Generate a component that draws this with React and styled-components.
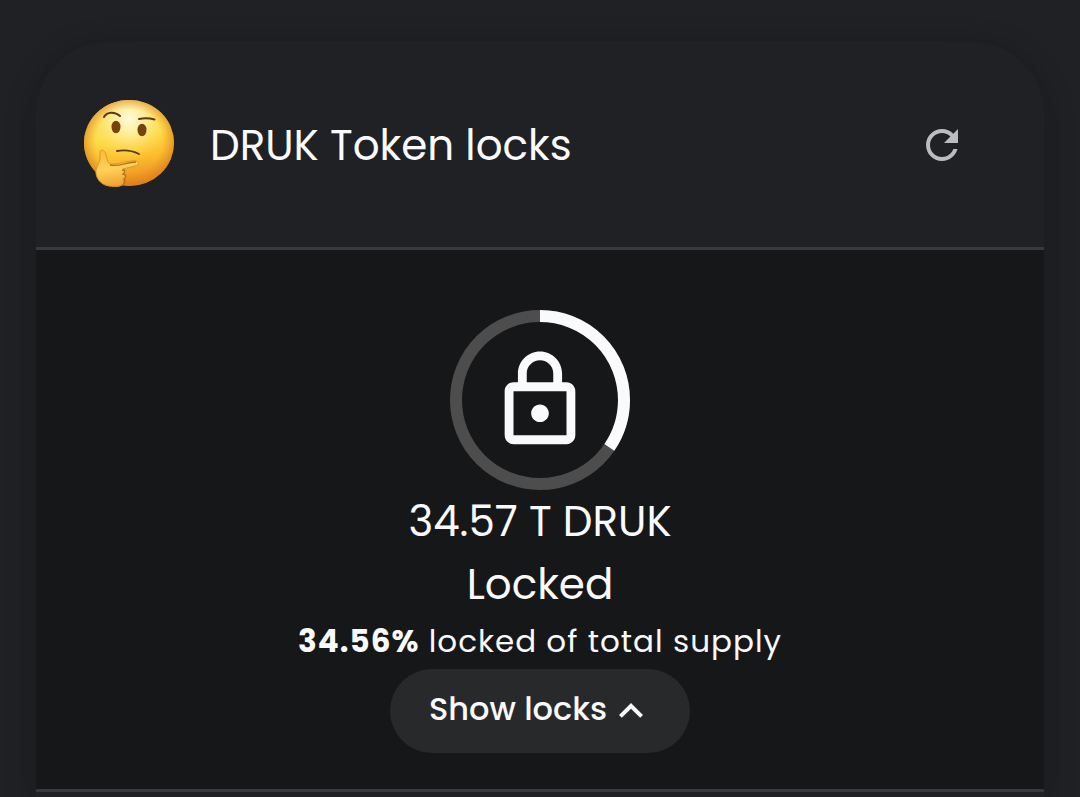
import React from 'react';
import styled, { createGlobalStyle } from 'styled-components';

const GlobalStyle = createGlobalStyle`
  *, *::before, *::after { box-sizing: border-box; }
  html { background: #202125; }
  body {
    margin: 0;
    color: #fafafc;
    font-family: Poppins, Inter, "Liberation Sans", sans-serif;
    -webkit-font-smoothing: antialiased;
  }
`;

const Page = styled.main`
  min-height: 100vh;
  padding: 42px 36px 0;
  display: flex;
  flex-direction: column;
  background: #202125;
  overflow: hidden;
`;

const Card = styled.section`
  flex: 1;
  border-radius: 72px 72px 0 0;
  background: #202124;
  box-shadow: 0 6px 30px rgba(10, 10, 12, 0.28);
  overflow: hidden;
`;

const CardHeader = styled.header`
  display: flex;
  align-items: center;
  gap: 36px;
  padding: 58px 78px 57px 48px;
  border-bottom: 3px solid #38393d;
`;

const Title = styled.h1`
  flex: 1;
  margin: 0;
  font-size: 42px;
  line-height: 63px;
  font-weight: 400;
`;

const IconButton = styled.button`
  display: flex;
  padding: 0;
  border: 0;
  background: none;
  color: #bcbcbe;
  cursor: pointer;
`;

const Icon = styled.svg`
  display: block;
  flex: none;
  width: ${(p) => p.$size}px;
  height: ${(p) => p.$size}px;
  fill: currentColor;
`;

const Emoji = styled.svg`
  display: block;
  flex: none;
  width: 90px;
  height: 90px;
`;

const CardBody = styled.div`
  display: flex;
  flex-direction: column;
  align-items: center;
  padding: 60px 24px 36px;
  background: #161719;
  border-bottom: 3px solid #38393d;
  text-align: center;
`;

const Progress = styled.div`
  display: grid;
  place-items: center;
  width: 180px;
  height: 180px;

  > * { grid-area: 1 / 1; }
`;

const Ring = styled.svg`
  width: 100%;
  height: 100%;
  fill: none;
  stroke-width: 12;
`;

const Amount = styled.p`
  margin: 0;
  font-size: 42px;
  line-height: 63px;
`;

const Share = styled.p`
  margin: 0 0 3px;
  font-size: 31px;
  line-height: 50px;
  letter-spacing: 1px;
`;

const ToggleButton = styled.button`
  display: flex;
  align-items: center;
  min-height: 84px;
  padding: 0 35px 0 39px;
  border: 0;
  border-radius: 42px;
  background: #28292b;
  color: inherit;
  font: inherit;
  font-size: 32px;
  font-weight: 500;
  cursor: pointer;
`;

const ToggleLabel = styled.span`
  padding-bottom: 4px;
`;

function ThinkingFace() {
  return (
    <Emoji viewBox="0 1 90 90" role="img" aria-label="Thinking face">
      <defs>
        <linearGradient id="skin" x1="0.4" y1="0" x2="0.6" y2="1">
          <stop offset="0" stopColor="#fbd86a" />
          <stop offset="0.4" stopColor="#fddb46" />
          <stop offset="0.68" stopColor="#fbbd30" />
          <stop offset="1" stopColor="#e8871d" />
        </linearGradient>
        <radialGradient id="shine" cx="0.5" cy="0.22" r="0.48">
          <stop offset="0" stopColor="#fffbdc" />
          <stop offset="0.4" stopColor="#fff1a5" stopOpacity="0.8" />
          <stop offset="1" stopColor="#ffe04d" stopOpacity="0" />
        </radialGradient>
        <radialGradient id="rim" cx="0.5" cy="0.48" r="0.53">
          <stop offset="0.7" stopColor="#e68a18" stopOpacity="0" />
          <stop offset="1" stopColor="#d67a19" stopOpacity="0.76" />
        </radialGradient>
        <linearGradient id="hand" x1="0.3" y1="0" x2="0.5" y2="1">
          <stop offset="0" stopColor="#fbbd38" />
          <stop offset="0.5" stopColor="#ffd158" />
          <stop offset="1" stopColor="#efa02f" />
        </linearGradient>
      </defs>
      <ellipse cx="45" cy="44" rx="45" ry="43" fill="url(#skin)" />
      <ellipse cx="45" cy="44" rx="45" ry="43" fill="url(#shine)" />
      <ellipse cx="45" cy="44" rx="45" ry="43" fill="url(#rim)" />
      <g fill="none" stroke="#5a3a18" strokeLinecap="round">
        <path d="M20 18C23 12.500 31 12.500 36 17" strokeWidth="2" />
        <path d="M55 20C60 19 65 19 70.500 20.500" strokeWidth="2" />
        <path d="M33 52Q45 50 55 55" strokeWidth="1.800" />
      </g>
      <ellipse cx="32" cy="28" rx="4.500" ry="6.200" fill="#77410f" />
      <ellipse cx="58" cy="31" rx="4.500" ry="6.200" fill="#77410f" />
      <path
        d="M16 53C17 49.500 21 51 22 56C23 60 23 63 26 65C33 66 44 61 52 62C56 63 55 66 51 67L39 70C43 71 43 74 40 75C43 77 41 80 39 81C42 88 32 88 25 87C17 86 11 79 12 71C13 66 16 63 16 59Z"
        fill="url(#hand)"
        stroke="#dd952a"
        strokeWidth="1"
      />
      <path
        d="M26 66C34 68 43 63 52 63M38 71Q43 71 39 75Q44 76 40 80Q42 82 39 86"
        fill="none"
        stroke="#b97019"
        strokeWidth="1.300"
      />
    </Emoji>
  );
}

function LockProgress({ percent }) {
  return (
    <Progress role="img" aria-label={`${percent}% locked`}>
      <Ring viewBox="0 0 180 180">
        <circle cx="90" cy="90" r="84" stroke="#4d4d4d" />
        <circle
          cx="90"
          cy="90"
          r="84"
          stroke="#fafafc"
          pathLength="100"
          strokeDasharray={`${percent} 100`}
          transform="rotate(-90 90 90)"
        />
      </Ring>
      <Icon $size={106} viewBox="0 0 24 24" aria-hidden="true">
        <path d="M18 8h-1V6c0-2.760-2.240-5-5-5S7 3.240 7 6v2H6c-1.100 0-2 .9-2 2v10c0 1.100.9 2 2 2h12c1.100 0 2-.9 2-2V10c0-1.100-.9-2-2-2zM9 6c0-1.660 1.340-3 3-3s3 1.340 3 3v2H9V6zm9 14H6V10h12v10zm-6-3c1.100 0 2-.9 2-2s-.9-2-2-2-2 .9-2 2 .9 2 2 2z" />
      </Icon>
    </Progress>
  );
}

export default function App() {
  return (
    <>
      <GlobalStyle />
      <Page>
        <Card>
          <CardHeader>
            <ThinkingFace />
            <Title>DRUK Token locks</Title>
            <IconButton type="button" aria-label="Refresh">
              <Icon $size={48} viewBox="0 0 24 24" aria-hidden="true">
                <path d="M17.650 6.350C16.200 4.900 14.210 4 12 4c-4.420 0-7.990 3.580-7.990 8s3.570 8 7.990 8c3.730 0 6.840-2.550 7.730-6h-2.080c-.82 2.330-3.040 4-5.650 4-3.310 0-6-2.690-6-6s2.690-6 6-6c1.660 0 3.140.69 4.220 1.780L13 11h7V4l-2.350 2.350z" />
              </Icon>
            </IconButton>
          </CardHeader>
          <CardBody>
            <LockProgress percent={34.56} />
            <Amount>34.57 T DRUK</Amount>
            <Amount>Locked</Amount>
            <Share>
              <strong>34.56%</strong> locked of total supply
            </Share>
            <ToggleButton type="button" aria-expanded="false">
              <ToggleLabel>Show locks</ToggleLabel>
              <Icon $size={48} viewBox="0 0 24 24" aria-hidden="true">
                <path d="M12 8l-6 6 1.410 1.410L12 10.830l4.590 4.580L18 14z" />
              </Icon>
            </ToggleButton>
          </CardBody>
        </Card>
      </Page>
    </>
  );
}
